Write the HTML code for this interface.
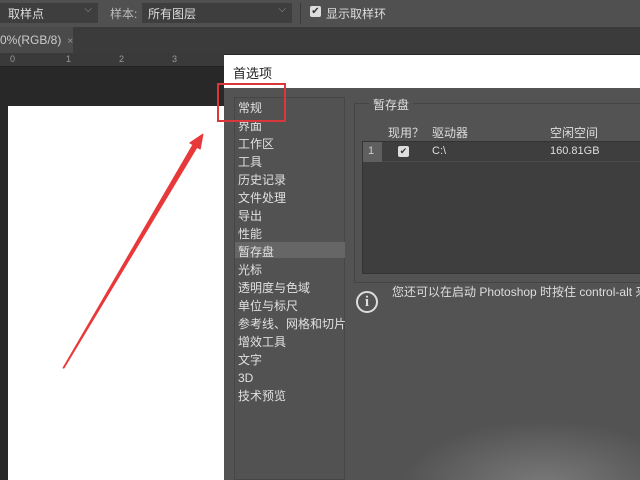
<!DOCTYPE html>
<html><head><meta charset="utf-8"><style>
*{margin:0;padding:0;box-sizing:border-box}
body{width:640px;height:480px;overflow:hidden;background:#282828;position:relative;font-family:"Liberation Sans","Noto Sans CJK SC",sans-serif;font-size:12px;color:#ddd}
.a{position:absolute;white-space:nowrap}
</style></head><body>
<div class="a" style="left:0;top:0;width:640px;height:27px;background:#505050"></div>
<div class="a" style="left:0;top:3px;width:98px;height:20px;background:#3e3e3e;padding:2px 0 0 8px;color:#ddd">取样点<span style="position:absolute;right:6px;top:1px;color:#999;font-size:10px">⌵</span></div>
<div class="a" style="left:110px;top:5px;color:#bbb">样本:</div>
<div class="a" style="left:142px;top:3px;width:150px;height:20px;background:#3e3e3e;padding:2px 0 0 6px">所有图层<span style="position:absolute;right:6px;top:1px;color:#999;font-size:10px">⌵</span></div>
<div class="a" style="left:300px;top:3px;width:1px;height:21px;background:#3a3a3a"></div>
<div class="a" style="left:310px;top:6px;width:11px;height:11px;background:#ddd;border-radius:2px;color:#333;font-size:10px;line-height:11px;text-align:center">✔</div>
<div class="a" style="left:326px;top:5px">显示取样环</div>
<div class="a" style="left:0;top:27px;width:640px;height:27px;background:#3b3b3b"></div>
<div class="a" style="left:0;top:27px;width:73px;height:26px;background:#4a4a4a;padding:6px 0 0 0;color:#ccc">0%(RGB/8)<span style="color:#999;margin-left:6px;font-size:10px">×</span></div>
<div class="a" style="left:0;top:53px;width:224px;height:14px;background:#3a3a3a;border-bottom:1px solid #222;font-size:9px;color:#999">
<span class="a" style="left:10px;top:1px">0</span><span class="a" style="left:66px;top:1px">1</span><span class="a" style="left:119px;top:1px">2</span><span class="a" style="left:172px;top:1px">3</span></div>
<div class="a" style="left:8px;top:106px;width:216px;height:374px;background:#fff"></div>
<div class="a" style="left:224px;top:55px;width:416px;height:33px;background:#fff;color:#222;font-size:13px;padding:8px 0 0 9px">首选项</div>
<div class="a" style="left:224px;top:88px;width:416px;height:392px;background:#535353"></div>
<div class="a" style="left:400px;top:420px;width:240px;height:60px;background:radial-gradient(ellipse at 60% 110%,#7a7a7a,#535353 70%)"></div>
<div class="a" style="left:234px;top:97px;width:111px;height:383px;background:#525252;border:1px solid #464646"></div>
<div class="a" style="left:235px;top:242px;width:110px;height:16px;background:#666"></div>
<div class="a" style="left:238px;top:99px;line-height:18px;color:#e0e0e0">常规<br>界面<br>工作区<br>工具<br>历史记录<br>文件处理<br>导出<br>性能<br>暂存盘<br>光标<br>透明度与色域<br>单位与标尺<br>参考线、网格和切片<br>增效工具<br>文字<br>3D<br>技术预览</div>
<div class="a" style="left:354px;top:103px;width:290px;height:180px;border:1px solid #444"></div>
<div class="a" style="left:369px;top:96px;background:#535353;padding:0 4px;color:#e0e0e0">暂存盘</div>
<div class="a" style="left:388px;top:124px">现用？</div>
<div class="a" style="left:432px;top:124px">驱动器</div>
<div class="a" style="left:550px;top:124px">空闲空间</div>
<div class="a" style="left:362px;top:141px;width:280px;height:133px;background:#3e3e3e;border:1px solid #333"></div>
<div class="a" style="left:363px;top:142px;width:278px;height:20px;border-bottom:1px solid #4a4a4a"></div>
<div class="a" style="left:363px;top:142px;width:19px;height:20px;background:#5f5f5f;color:#ccc;font-size:11px;padding:3px 0 0 5px">1</div>
<div class="a" style="left:398px;top:146px;width:11px;height:11px;background:#ddd;border-radius:2px;color:#333;font-size:9px;line-height:11px;text-align:center">✔</div>
<div class="a" style="left:432px;top:145px;font-size:11px">C:\</div>
<div class="a" style="left:550px;top:145px;font-size:11px">160.81GB</div>
<div class="a" style="left:356px;top:291px;width:22px;height:22px;border:2px solid #ddd;border-radius:50%;text-align:center;font-size:15px;font-weight:bold;line-height:18px;font-family:'Liberation Serif',serif">i</div>
<div class="a" style="left:392px;top:283px;color:#ddd">您还可以在启动 Photoshop 时按住 control-alt 来</div>
<svg class="a" style="left:0;top:0" width="640" height="480">
<rect x="218" y="84" width="67" height="37" fill="none" stroke="#d9373a" stroke-width="2"/>
<polygon points="63,368 192.9,144.7 189.8,142.9 203,134 200.2,149 197,147.3 64,368" fill="#e8393a" stroke="#e8393a" stroke-width="1" stroke-linejoin="round"/>
</svg>
</body></html>
